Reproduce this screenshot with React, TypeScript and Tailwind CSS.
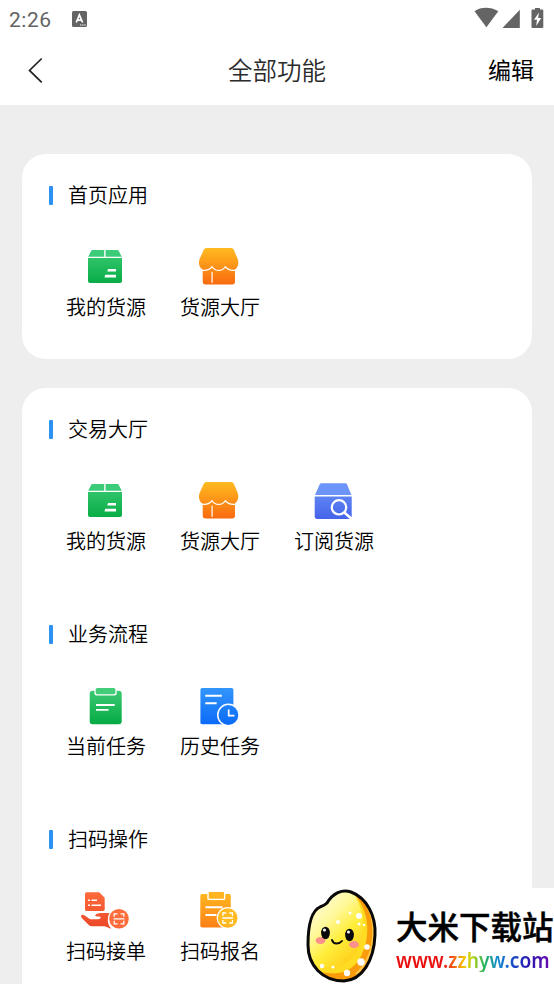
import React from "react";

interface MenuItem {
  label: string;
  icon: () => React.JSX.Element;
}

interface MenuSection {
  title: string;
  items: MenuItem[];
}

const ICON_CLASS = "block w-14 h-11";

const Gradient = ({ id, from, to }: { id: string; from: string; to: string }) => (
  <defs>
    <linearGradient id={id} x1="0" y1="4" x2="0" y2="42" gradientUnits="userSpaceOnUse">
      <stop offset="0" stopColor={from} />
      <stop offset="1" stopColor={to} />
    </linearGradient>
  </defs>
);

const ScanBadge = ({ x, y, fill }: { x: number; y: number; fill: string }) => (
  <g transform={`translate(${x} ${y})`}>
    <circle r="11" fill="#fff" />
    <circle r="9.8" fill={fill} />
    <path
      d="M-4.8-2V-5H-1.5M4.8-2V-5H1.5M-4.8 2V5H-1.5M4.8 2V5H1.5M-5.4 0H5.4"
      fill="none"
      stroke="#fff"
      strokeWidth="1.3"
    />
  </g>
);

const BoxIcon = () => (
  <svg viewBox="0 0 56 44" className={ICON_CLASS}>
    <Gradient id="box" from="#3fcd78" to="#06ab43" />
    <path d="M14.5 7h11.7v6.8H10.2l2.8-5.6q.5-1.2 1.5-1.2zM27.6 7h11.8q1 0 1.5 1.2l2.9 5.6H27.6z" fill="#3ccb78" />
    <path d="M10 15h34v23q0 2-2 2H12q-2 0-2-2z" fill="url(#box)" />
    <path d="M30 26h8v2.6h-8.700zM27.200 31.800H38v2.700H26.500z" fill="#fff" />
  </svg>
);

const ShopIcon = () => (
  <svg viewBox="0 0 56 44" className={ICON_CLASS}>
    <Gradient id="shop" from="#ffbd20" to="#f9690f" />
    <path d="M10.7 24H43v15q0 2.4-2.4 2.4H13.1q-2.4 0-2.4-2.4z" fill="url(#shop)" />
    <path
      d="M14.5 5h24.6q1.8 0 2.6 1.6l4 9.4c1.8 5-.6 11.200-5.600 11.200-3 0-5-1-6.800-3-1.600 2.200-3.600 3.200-6.600 3.200s-5-1-6.600-3.200c-1.800 2-3.700 3-6.800 3C8 27.200 5.800 21 7.600 16l4.300-9.400Q12.700 5 14.500 5z"
      fill="url(#shop)"
    />
    <path
      d="M9.500 27.200c5 .8 8.300-.400 10.600-3.500 1.600 2.500 3.600 3.700 6.600 3.700s5-1.200 6.600-3.700c2.300 3.100 5.800 4.300 10.700 3.500"
      fill="none"
      stroke="#fff"
      strokeWidth="1.200"
    />
    <path d="M20.100 28.700v11" stroke="#fff" strokeWidth="1.200" />
  </svg>
);

const SearchBoxIcon = () => (
  <svg viewBox="0 0 56 44" className={ICON_CLASS}>
    <Gradient id="search" from="#6f97fa" to="#4564ea" />
    <path d="M15.500 6.300h23.700q1.500 0 2 1.400l4.200 10.200H9l4.500-10.200q.6-1.400 2-1.400z" fill="#6d94f8" />
    <path d="M8.700 19.600h37v20.100q0 2.400-2.400 2.400H11.100q-2.400 0-2.400-2.400z" fill="url(#search)" />
    <circle cx="33" cy="30.300" r="7.200" fill="none" stroke="#fff" strokeWidth="2.200" />
    <path d="M38 35.300l7.500 6.500" stroke="#fff" strokeWidth="2.600" />
  </svg>
);

const TaskIcon = () => (
  <svg viewBox="0 0 56 44" className={ICON_CLASS}>
    <Gradient id="task" from="#43cd79" to="#05ab43" />
    <rect x="11.700" y="8.800" width="32" height="33.500" rx="3" fill="url(#task)" />
    <rect x="16.400" y="4.600" width="22.300" height="8.900" rx="2.500" fill="#fff" />
    <rect x="17.700" y="6" width="19.700" height="6.200" rx="1.600" fill="#43cc79" />
    <path d="M18 23h18.700M18 27.900h12.500" stroke="#fff" strokeWidth="1.900" />
  </svg>
);

const HistoryIcon = () => (
  <svg viewBox="0 0 56 44" className={ICON_CLASS}>
    <Gradient id="history" from="#3598fc" to="#0b6bf8" />
    <rect x="8.400" y="6" width="33" height="36.300" rx="1.800" fill="url(#history)" />
    <path d="M13.300 13.800h16.500M13.300 21.300h11.400" stroke="#fff" strokeWidth="1.900" />
    <circle cx="36.400" cy="33" r="11.400" fill="#fff" />
    <circle cx="36.400" cy="33" r="9.900" fill="url(#history)" />
    <path d="M36.700 27.400v6.200h5.800" fill="none" stroke="#fff" strokeWidth="1.700" />
  </svg>
);

const ScanOrderIcon = () => (
  <svg viewBox="0 0 56 44" className={ICON_CLASS}>
    <Gradient id="order" from="#ff6d3d" to="#ea4627" />
    <path d="M8.500 5.200h12.700l5.500 5.500v11.800q0 1.400-1.400 1.400H8.500Q7 23.900 7 22.500V6.700q0-1.500 1.500-1.500z" fill="url(#order)" />
    <path d="M10 13.300h2M13.500 13.300h5.500M10 18.300h2M13.500 18.300h9.500" stroke="#fff" strokeWidth="1.600" />
    <path
      d="M3.500 28c1.400-.8 2.500 0 3.500.7l4 2.700q1.200.9 2.700.9h6.300c3.500 0 3.500-2.700.6-2.700-2.200 0-3.400-.3-3.300-1.400.3-1.200 3-2.200 5.700-2.200h9.400c-3.700 4.600-3.300 11.400.9 15.600-2.600-.1-4-2.300-6.800-2.400H14q-2 0-3.500-1.500L3.800 31q-1.500-1.600-.3-3z"
      fill="url(#order)"
    />
    <ScanBadge x={41} y={31.800} fill="url(#order)" />
  </svg>
);

const ScanSignIcon = () => (
  <svg viewBox="0 0 56 44" className={ICON_CLASS}>
    <Gradient id="sign" from="#ffbb20" to="#fc7d16" />
    <rect x="8.300" y="7" width="30.500" height="33.500" rx="1.800" fill="url(#sign)" />
    <rect x="15.300" y="3.800" width="18" height="9.200" rx="1.500" fill="#fff" />
    <rect x="16.700" y="5" width="15.300" height="6.800" rx="1" fill="#ffb51f" />
    <path d="M13.500 20.300h17M13.500 27.900h11" stroke="#fff" strokeWidth="2" />
    <ScanBadge x={35.700} y={31} fill="url(#sign)" />
  </svg>
);

const myGoods: MenuItem = { label: "我的货源", icon: BoxIcon };
const goodsHall: MenuItem = { label: "货源大厅", icon: ShopIcon };

const homeSection: MenuSection = { title: "首页应用", items: [myGoods, goodsHall] };

const sections: MenuSection[] = [
  { title: "交易大厅", items: [myGoods, goodsHall, { label: "订阅货源", icon: SearchBoxIcon }] },
  {
    title: "业务流程",
    items: [
      { label: "当前任务", icon: TaskIcon },
      { label: "历史任务", icon: HistoryIcon },
    ],
  },
  {
    title: "扫码操作",
    items: [
      { label: "扫码接单", icon: ScanOrderIcon },
      { label: "扫码报名", icon: ScanSignIcon },
    ],
  },
];

const Section = ({ title, items }: MenuSection) => (
  <section className="h-[205px] shrink-0 pt-[27px] pl-[27px]">
    <div className="flex items-center h-7">
      <span className="w-1 h-[19px] rounded-[1px] bg-[#2c91f3]" />
      <h2 className="ml-[15px] text-[20px] leading-7 font-[350]">{title}</h2>
    </div>
    <div className="flex mt-[34px]">
      {items.map(({ label, icon: Icon }) => (
        <div key={label} className="w-[114px] flex flex-col items-center">
          <Icon />
          <span className="mt-1.5 text-[20px] leading-7 font-[350]">{label}</span>
        </div>
      ))}
    </div>
  </section>
);

const StatusBar = () => (
  <div className="flex items-center h-[38px] pl-[9px] text-[#646464]">
    <span className="pt-px font-[Roboto] text-[21px] leading-[38px] tracking-[0.5px]">2:26</span>
    <svg viewBox="0 0 16 16" className="w-4 h-4 ml-5 -mt-px">
      <rect width="15" height="16" rx="1.500" fill="#646464" />
      <path d="M4.200 11.500L7.400 4l3.200 7.500M5.500 9.200h3.800" fill="none" stroke="#fff" strokeWidth="1.700" />
      <path d="M8 14h1.400M10.200 14h1.400M12.400 14h1.400" stroke="#fff" strokeWidth="1" />
    </svg>
    <svg viewBox="0 0 72 22" className="w-[72px] h-[22px] ml-auto mr-[9px] -mt-0.5" fill="#646464">
      <path d="M1.500 4.200C8-.300 17.500-.300 25.300 4.200L13.400 20.300z" />
      <path d="M46.800 2.700v18.300H29.500z" />
      <path d="M59.500 2.500H62V1h5v1.500h2.300q1 0 1 1V20q0 1-1 1h-9.800q-1 0-1-1V3.500q0-1 1-1z" />
      <path d="M66 5.500l-5 7.200h3l-.8 6.300 5-8h-3.100z" fill="#fff" />
    </svg>
  </div>
);

const Header = () => (
  <header className="grid grid-cols-[1fr_auto_1fr] items-center h-[67px] px-5">
    <svg viewBox="0 0 15 26" className="w-[15px] h-[26px] ml-2 -mt-[3px]" fill="none" stroke="#222" strokeWidth="1.700">
      <path d="M13.700 1.500L1.500 13.400l12.200 11.900" />
    </svg>
    <h1 className="-mt-1 text-[24.5px] leading-9 font-[350] text-[#2b2b2b] whitespace-nowrap">全部功能</h1>
    <button className="-mt-1.5 text-right text-[23px] leading-9">编辑</button>
  </header>
);

const RiceMascot = () => (
  <svg viewBox="0 0 84 100" className="w-[84px] h-[100px] shrink-0">
    <defs>
      <linearGradient id="rice" x1="0.200" y1="0.100" x2="0.750" y2="0.850">
        <stop offset="0" stopColor="#fffde0" />
        <stop offset="0.400" stopColor="#fff9a0" />
        <stop offset="0.700" stopColor="#ffee3b" />
        <stop offset="1" stopColor="#ffd21f" />
      </linearGradient>
      <clipPath id="shell">
        <path d="M27 19C33 9 42 5 51 8c16 6 25 24 24 43-1 26-13 45-31 46C22 97 8 81 8 61c0-17 3-34 12-38 3-1 5-2 7-4z" />
      </clipPath>
    </defs>
    <g clipPath="url(#shell)">
      <path d="M0 0h84v100H0z" fill="#fa9b0c" />
      <path d="M49 5c12 10 17 25 16 42-1 23-12 40-31 42-10 1-20-2-26-9L0 50V0z" fill="url(#rice)" />
      <path d="M55 12c11 18 12 45-2 61-8 9-22 14-35 9 12 12 32 9 42-8 11-18 10-47-5-62z" fill="#ffdc22" />
      <path d="M63 15c15 20 14 56-7 75" fill="none" stroke="#ffc44a" strokeWidth="2" />
    </g>
    <path
      d="M27 19C33 9 42 5 51 8c16 6 25 24 24 43-1 26-13 45-31 46C22 97 8 81 8 61c0-17 3-34 12-38 3-1 5-2 7-4z"
      fill="none"
      stroke="#080808"
      strokeWidth="3"
    />
    <g fill="#fff">
      <circle cx="59" cy="32" r="3" />
      <circle cx="50" cy="29" r="1.500" />
      <circle cx="59" cy="40" r="1.500" />
      <circle cx="64" cy="41" r="1.200" />
      <circle cx="38" cy="38" r="2" />
      <circle cx="67" cy="63" r="2.800" />
      <circle cx="61" cy="78" r="3.700" />
      <circle cx="47" cy="89" r="3.200" />
      <circle cx="22" cy="82" r="2.200" />
      <circle cx="33" cy="83" r="1.500" />
    </g>
    <ellipse cx="20.500" cy="56.500" rx="4.800" ry="3.600" fill="#fb8f8d" />
    <ellipse cx="54" cy="60.500" rx="4.800" ry="3.600" fill="#fb8f8d" />
    <ellipse cx="25.500" cy="49" rx="4.400" ry="6.200" fill="#0a0a0a" />
    <ellipse cx="49.500" cy="51" rx="4.400" ry="6.200" fill="#0a0a0a" />
    <circle cx="24.500" cy="46" r="1.500" fill="#fff" />
    <circle cx="48.500" cy="48" r="1.500" fill="#fff" />
    <path d="M32 56q1 3.500 4.500 3.500T42 57" fill="none" stroke="#0a0a0a" strokeWidth="2" strokeLinecap="round" />
  </svg>
);

const SiteBadge = () => (
  <div className="absolute left-[300px] bottom-0 flex w-[254px] h-24 bg-white">
    <div className="-mt-1">
      <RiceMascot />
    </div>
    <div className="ml-3 pt-[21px] whitespace-nowrap">
      <div className="text-[31.5px] leading-8 font-medium text-black [-webkit-text-stroke:0.5px_#000]">大米下载站</div>
      <div className="w-fit mt-[5px] origin-left scale-x-[0.87] font-['Noto_Sans'] text-[22px] leading-[26px] font-semibold text-transparent bg-clip-text bg-[linear-gradient(90deg,#e80f0f_0%,#e81010_30%,#f25a12_37%,#f5c400_44%,#b5d418_50%,#27b558_57%,#168bd0_66%,#1749c8_76%,#2a18b0_86%,#6a0cae_100%)]">
        www.zzhyw.com
      </div>
    </div>
  </div>
);

export default function App() {
  return (
    <div className="relative flex flex-col w-[554px] h-[984px] overflow-hidden bg-[#eeeeee] text-black font-['Noto_Sans_CJK_SC',sans-serif]">
      <div className="h-[105px] shrink-0 bg-white">
        <StatusBar />
        <Header />
      </div>
      <main className="flex flex-col gap-[29px] px-[22px] pt-[49px]">
        <div className="rounded-[24px] bg-white">
          <Section {...homeSection} />
        </div>
        <div className="rounded-t-[24px] bg-white">
          {sections.map((section) => (
            <Section key={section.title} {...section} />
          ))}
        </div>
      </main>
      <SiteBadge />
    </div>
  );
}
